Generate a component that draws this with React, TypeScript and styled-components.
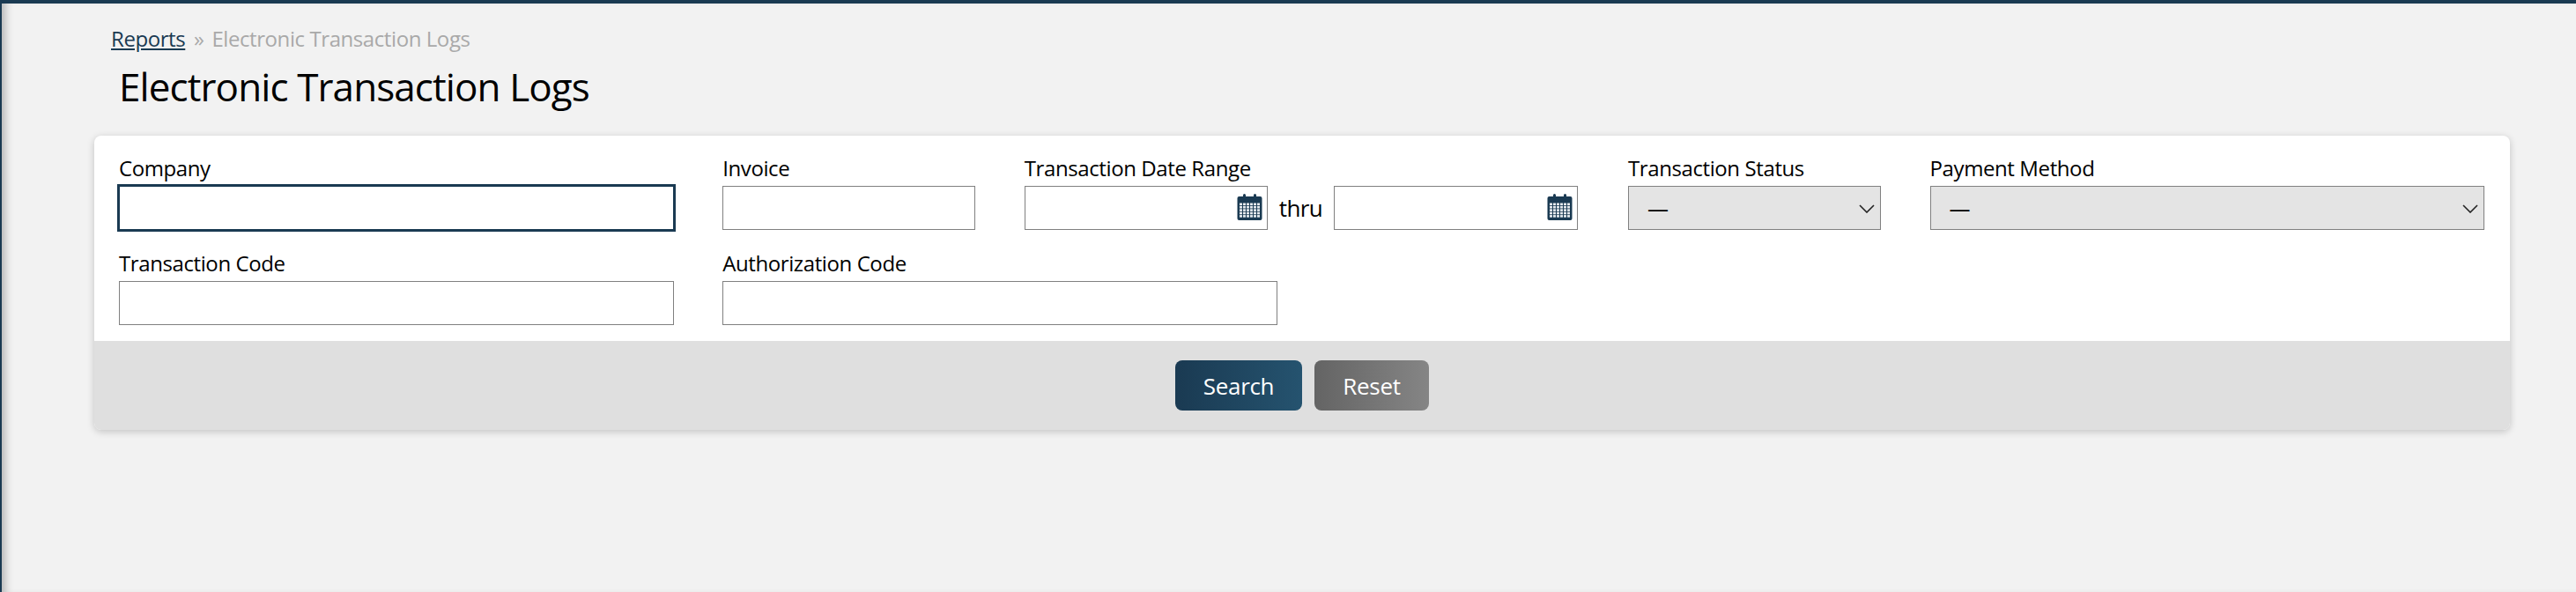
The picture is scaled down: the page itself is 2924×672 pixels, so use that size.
import React from 'react';
import styled, { createGlobalStyle } from 'styled-components';

const GlobalStyle = createGlobalStyle`
  html, body {
    margin: 0;
    padding: 0;
    height: 100%;
    overflow: hidden;
  }
  * {
    box-sizing: border-box;
  }
`;

const Page = styled.div`
  height: 100vh;
  background: #f2f2f2;
  border-top: 4px solid #1a3a52;
  border-left: 2px solid #1a3a52;
  box-shadow: inset 10px 0 10px -6px rgba(0, 0, 0, 0.25);
  padding: 24px 75px 0 105px;
  font-family: "Open Sans", "Noto Sans", sans-serif;
  color: #000;
`;

const Breadcrumb = styled.nav`
  margin-left: 19px;
  font-size: 24px;
  line-height: 32px;
  letter-spacing: -0.42px;
  color: #a9a9a9;
`;

const CrumbLink = styled.a`
  color: #1a3a52;
  text-decoration: underline;
`;

const CrumbSeparator = styled.span`
  margin: 0 3px 0 4px;
`;

const PageTitle = styled.h1`
  margin: 12px 0 30px 28px;
  font-size: 44px;
  line-height: 52px;
  font-weight: 400;
  letter-spacing: -0.9px;
`;

const Card = styled.form`
  background: #fff;
  border-radius: 8px;
  box-shadow: 0 2px 8px rgba(0, 0, 0, 0.2);
  overflow: hidden;
`;

const FieldGrid = styled.div`
  display: grid;
  grid-template-columns: repeat(8, 287.3px);
  column-gap: 55.3px;
  row-gap: 22px;
  padding: 21px 28px 0;
  height: 233px;
  align-content: start;
`;

const Field = styled.div<{ $span?: number }>`
  grid-column: span ${(p) => p.$span ?? 1};
  min-width: 0;
`;

const Label = styled.label`
  display: block;
  margin-bottom: 4px;
  font-size: 24px;
  line-height: 32px;
  letter-spacing: -0.4px;
`;

const TextInput = styled.input<{ $focused?: boolean }>`
  display: block;
  width: 100%;
  height: 50px;
  background: #fff;
  border: 1px solid #808080;
  border-radius: 0;
  outline: ${(p) => (p.$focused ? '3px solid #1a3a52' : 'none')};
  outline-offset: -1px;
  padding: 0 16px;
  font: inherit;
`;

const DateRow = styled.div`
  display: flex;
  align-items: center;
  gap: 13px;
`;

const DateBox = styled.div`
  position: relative;
  width: 276px;

  &:last-child {
    width: 277px;
  }
`;

const CalendarIcon = styled.svg`
  position: absolute;
  right: 6px;
  top: 9px;
  width: 29px;
  height: 30px;
  pointer-events: none;
`;

const Thru = styled.span`
  font-size: 26px;
  letter-spacing: -0.6px;
`;

const SelectBox = styled.div`
  position: relative;
`;

const Select = styled.select`
  display: block;
  width: 100%;
  height: 50px;
  appearance: none;
  background: #e4e4e4;
  border: 1px solid #808080;
  border-radius: 0;
  padding: 0 21px;
  font: inherit;
  font-size: 24px;
  color: #000;
`;

const Chevron = styled.svg`
  position: absolute;
  right: 7px;
  top: 21px;
  width: 18px;
  height: 10px;
  pointer-events: none;
`;

const Footer = styled.div`
  display: flex;
  justify-content: center;
  gap: 14px;
  height: 101px;
  padding-top: 22px;
  background: #dfdfdf;
`;

const Button = styled.button<{ $kind: 'primary' | 'secondary' }>`
  height: 57px;
  width: ${(p) => (p.$kind === 'primary' ? '144px' : '130px')};
  border: none;
  border-radius: 8px;
  background: ${(p) =>
    p.$kind === 'primary'
      ? 'linear-gradient(90deg, #1a3a52, #25536f)'
      : 'linear-gradient(90deg, #646464, #858585)'};
  color: #fff;
  font: inherit;
  font-size: 26px;
  letter-spacing: -0.3px;
  cursor: pointer;
`;

const Calendar = () => (
  <CalendarIcon viewBox="0 0 29 30" aria-hidden="true">
    <rect x="0.5" y="3" width="28" height="27" rx="2" fill="#1a3a52" />
    <rect x="7" y="0" width="3" height="7" rx="1.5" fill="#1a3a52" />
    <rect x="19" y="0" width="3" height="7" rx="1.5" fill="#1a3a52" />
    {[0, 1, 2, 3, 4].map((row) =>
      [0, 1, 2, 3, 4, 5].map((col) => (
        <rect
          key={`${row}-${col}`}
          x={3 + col * 4}
          y={10.5 + row * 3.4}
          width="3"
          height="2.6"
          fill="#e6ebef"
        />
      ))
    )}
  </CalendarIcon>
);

const SelectField = () => (
  <SelectBox>
    <Select defaultValue="none">
      <option value="none">—</option>
    </Select>
    <Chevron viewBox="0 0 18 10" aria-hidden="true">
      <path d="M1 1l8 8L17 1" fill="none" stroke="#222" strokeWidth="1.6" />
    </Chevron>
  </SelectBox>
);

const App = () => (
  <Page>
    <GlobalStyle />
    <Breadcrumb>
      <CrumbLink href="#">Reports</CrumbLink>
      <CrumbSeparator> » </CrumbSeparator>
      Electronic Transaction Logs
    </Breadcrumb>
    <PageTitle>Electronic Transaction Logs</PageTitle>
    <Card onSubmit={(e) => e.preventDefault()}>
      <FieldGrid>
        <Field $span={2}>
          <Label>Company</Label>
          <TextInput $focused />
        </Field>
        <Field>
          <Label>Invoice</Label>
          <TextInput />
        </Field>
        <Field $span={2}>
          <Label>Transaction Date Range</Label>
          <DateRow>
            <DateBox>
              <TextInput />
              <Calendar />
            </DateBox>
            <Thru>thru</Thru>
            <DateBox>
              <TextInput />
              <Calendar />
            </DateBox>
          </DateRow>
        </Field>
        <Field>
          <Label>Transaction Status</Label>
          <SelectField />
        </Field>
        <Field $span={2}>
          <Label>Payment Method</Label>
          <SelectField />
        </Field>
        <Field $span={2}>
          <Label>Transaction Code</Label>
          <TextInput />
        </Field>
        <Field $span={2}>
          <Label>Authorization Code</Label>
          <TextInput />
        </Field>
      </FieldGrid>
      <Footer>
        <Button $kind="primary" type="submit">Search</Button>
        <Button $kind="secondary" type="reset">Reset</Button>
      </Footer>
    </Card>
  </Page>
);

export default App;
